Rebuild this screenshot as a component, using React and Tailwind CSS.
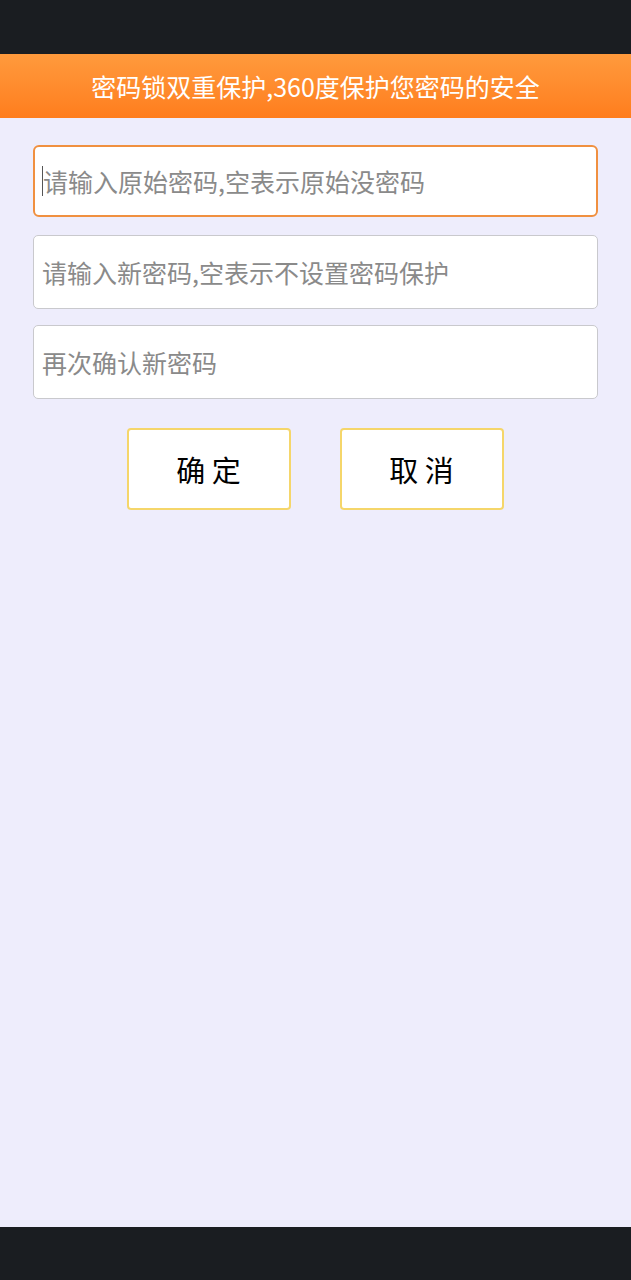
export default function App() {
  const font = { fontFamily: '"Noto Sans CJK SC", "Noto Sans", sans-serif' };
  return (
    <div className="flex h-[1280px] w-[631px] flex-col bg-[#eeedfc]" style={font}>
      <div className="h-[54px] shrink-0 bg-[#1a1d21]" />
      <div className="flex h-[64px] shrink-0 items-center justify-center bg-gradient-to-b from-[#ff9a3c] to-[#ff7d1c]">
        <span className="text-[25px] leading-none text-white">密码锁双重保护,360度保护您密码的安全</span>
      </div>
      <div className="flex flex-1 flex-col px-[33px] pt-[27px]">
        <div className="flex h-[72px] items-center rounded-[6px] border-2 border-[#f09040] bg-white pl-[7px]">
          <span className="h-[30px] w-px bg-[#555]" />
          <span className="text-[25px] leading-none text-[#8a8a8a]">请输入原始密码,空表示原始没密码</span>
        </div>
        <div className="mt-[18px] flex h-[74px] items-center rounded-[5px] border border-[#c9c9cd] bg-white pl-[8px]">
          <span className="text-[25px] leading-none text-[#8a8a8a]">请输入新密码,空表示不设置密码保护</span>
        </div>
        <div className="mt-[16px] flex h-[74px] items-center rounded-[5px] border border-[#c9c9cd] bg-white pl-[8px]">
          <span className="text-[25px] leading-none text-[#8a8a8a]">再次确认新密码</span>
        </div>
        <div className="mt-[29px] flex justify-center gap-[49px] pr-[1px]">
          <button className="flex h-[82px] w-[164px] items-center justify-center rounded-[4px] border-2 border-[#f5d66a] bg-white text-[29px] leading-none text-black">
            确 定
          </button>
          <button className="flex h-[82px] w-[164px] items-center justify-center rounded-[4px] border-2 border-[#f5d66a] bg-white text-[29px] leading-none text-black">
            取 消
          </button>
        </div>
      </div>
      <div className="h-[53px] shrink-0 bg-[#1a1d21]" />
    </div>
  );
}
